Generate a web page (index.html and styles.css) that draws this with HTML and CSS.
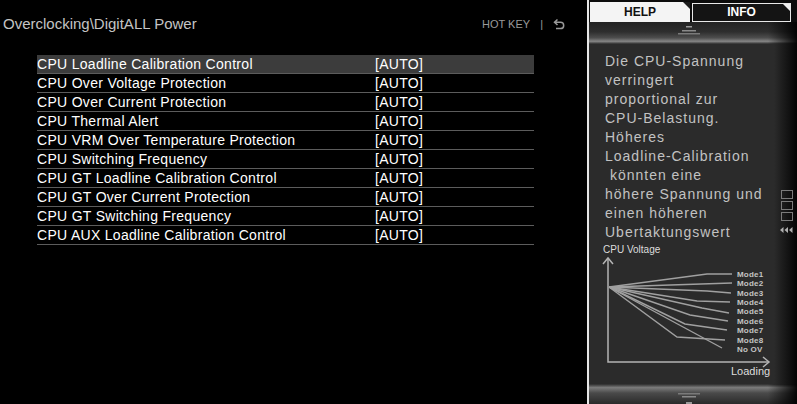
FILE: index.html
```html
<!DOCTYPE html>
<html lang="en">
<head>
    <meta charset="UTF-8">
    <meta name="viewport" content="width=device-width, initial-scale=1.0">
    <title>DigitALL Power</title>
    <link rel="stylesheet" href="styles.css">
</head>
<body>
    <main class="main">
        <header class="top-bar">
            <div class="path">Overclocking\DigitALL Power</div>
            <div class="hotkey">
                <span>HOT KEY</span>
                <span class="sep">|</span>
                <svg class="back-icon" width="12" height="12" viewBox="0 0 12 12">
                    <path d="M4.5 1.5 L1.5 4.2 L4.5 7 M1.5 4.2 H7.5 A3.2 3.2 0 0 1 7.5 10.6 H3" fill="none" stroke="#9a9a9a" stroke-width="1.5"/>
                </svg>
            </div>
        </header>

        <!-- settings list -->
        <div class="settings">
            <div class="row selected"><span class="label">CPU Loadline Calibration Control</span><span class="value">[AUTO]</span></div>
            <div class="row"><span class="label">CPU Over Voltage Protection</span><span class="value">[AUTO]</span></div>
            <div class="row"><span class="label">CPU Over Current Protection</span><span class="value">[AUTO]</span></div>
            <div class="row"><span class="label">CPU Thermal Alert</span><span class="value">[AUTO]</span></div>
            <div class="row"><span class="label">CPU VRM Over Temperature Protection</span><span class="value">[AUTO]</span></div>
            <div class="row"><span class="label">CPU Switching Frequency</span><span class="value">[AUTO]</span></div>
            <div class="row"><span class="label">CPU GT Loadline Calibration Control</span><span class="value">[AUTO]</span></div>
            <div class="row"><span class="label">CPU GT Over Current Protection</span><span class="value">[AUTO]</span></div>
            <div class="row"><span class="label">CPU GT Switching Frequency</span><span class="value">[AUTO]</span></div>
            <div class="row"><span class="label">CPU AUX Loadline Calibration Control</span><span class="value">[AUTO]</span></div>
        </div>
    </main>

    <aside class="panel">
        <div class="tabs">
            <div class="tab tab-help">HELP</div>
            <div class="tab tab-info">INFO</div>
        </div>

        <div class="band band-top">
            <svg width="24" height="14" viewBox="0 0 24 14">
                <rect x="9" y="4" width="6" height="1.5" fill="#9a9a9a"/>
                <rect x="5" y="8" width="14" height="1.5" fill="#8a8a8a"/>
                <rect x="1" y="11" width="22" height="1.5" fill="#7a7a7a"/>
            </svg>
        </div>

        <div class="help-body">
            <p class="help-text">Die CPU-Spannung<br>verringert<br>proportional zur<br>CPU-Belastung.<br>Höheres<br>Loadline-Calibration<br>&nbsp;könnten eine<br>höhere Spannung und<br>einen höheren<br>Ubertaktungswert</p>

            <svg class="chart" width="198" height="142" viewBox="0 0 198 142">
                <text x="14" y="11" class="axis-label">CPU Voltage</text>
                <g fill="none" stroke="#b4b4b4" stroke-width="1.5">
                    <path d="M19 16 V120 H180"/>
                    <path d="M14 22 L19 16 L24 22"/>
                    <path d="M174 115 L180 120 L174 125"/>
                </g>
                <g fill="none" stroke="#a0a0a0" stroke-width="1.4">
                    <path d="M20 45 L118 32 L143 32"/>
                    <path d="M20 45 L143 41"/>
                    <path d="M20 45 L118 49 L142 51"/>
                    <path d="M20 45 L108 59 L141 60"/>
                    <path d="M20 45 L113 66 L140 71"/>
                    <path d="M20 45 L101 73 L139 79"/>
                    <path d="M20 45 L96 82 L138 88"/>
                    <path d="M20 45 L88 95 L136 98"/>
                    <path d="M20 45 L133 106"/>
                </g>
                <g class="mode-label">
                    <text x="148" y="34.5">Mode1</text>
                    <text x="148" y="43.5">Mode2</text>
                    <text x="148" y="54">Mode3</text>
                    <text x="148" y="63">Mode4</text>
                    <text x="148" y="72">Mode5</text>
                    <text x="148" y="82">Mode6</text>
                    <text x="148" y="91">Mode7</text>
                    <text x="148" y="101">Mode8</text>
                    <text x="148" y="110">No OV</text>
                </g>
                <text x="142" y="133" class="axis-label loading">Loading</text>
            </svg>
        </div>

        <div class="band band-bottom">
            <svg width="24" height="20" viewBox="0 0 24 20">
                <rect x="1" y="9" width="22" height="1.5" fill="#7a7a7a"/>
                <rect x="5" y="12" width="14" height="1.5" fill="#8a8a8a"/>
                <rect x="9" y="18" width="6" height="2" fill="#9a9a9a"/>
            </svg>
        </div>

        <!-- scroll marks over the right edge -->
        <div class="scroll-marks">
            <span class="mark"></span>
            <span class="mark"></span>
            <span class="mark"></span>
            <svg class="arrows" width="13" height="6" viewBox="0 0 13 6">
                <path d="M0 3 L3.5 0 V6 Z M4.5 3 L8 0 V6 Z M9 3 L12.5 0 V6 Z" fill="#b0b0b0"/>
            </svg>
        </div>
    </aside>
</body>
</html>
```

FILE: styles.css
```css
html, body {
    margin: 0;
    padding: 0;
    height: 404px;
    overflow: hidden;
}

body {
    display: flex;
    background-color: #000000;
    font-family: "Liberation Sans", Arial, sans-serif;
    color: #ffffff;
}

.main {
    width: 587px;
    flex-shrink: 0;
}

.top-bar {
    display: flex;
    justify-content: space-between;
    align-items: flex-start;
    padding: 14px 22px 0 3px;
    height: 20px;
}

.path {
    font-size: 15px;
    line-height: 20px;
    color: #c4c4c4;
}

.hotkey {
    display: flex;
    align-items: center;
    gap: 8px;
    margin-top: 3px;
    font-size: 11px;
    line-height: 14px;
    color: #9a9a9a;
}

.hotkey .sep {
    margin: 0 2px;
}

.settings {
    margin: 21px 0 0 37px;
    width: 497px;
}

.row {
    display: flex;
    height: 18px;
    line-height: 18px;
    font-size: 14px;
    letter-spacing: 0.3px;
    border-bottom: 1px solid #5c5c5c;
}

.row.selected {
    background-color: #3c3c3c;
}

.row .label {
    width: 338px;
}

/* help panel */
.panel {
    position: relative;
    width: 208px;
    border-left: 2px solid #e6e6e6;
    display: flex;
    flex-direction: column;
    background: linear-gradient(to right, #2b2b2b 89%, #040404 100%);
}

.tabs {
    display: flex;
    height: 20px;
    padding-top: 2px;
    background-color: #0c0c0c;
}

.tab {
    position: relative;
    height: 20px;
    line-height: 20px;
    text-align: center;
    font-size: 12px;
    font-weight: bold;
    box-sizing: border-box;
}

.tab-help {
    width: 100px;
    margin-left: 1px;
    background-color: #f4f4f4;
    color: #111111;
}

.tab-help::after {
    content: "";
    position: absolute;
    top: 0;
    right: 0;
    border-top: 7px solid #1c1c1c;
    border-left: 7px solid transparent;
}

.tab-info {
    width: 99px;
    margin-left: 2px;
    margin-top: 1px;
    height: 19px;
    line-height: 16px;
    border: 1.5px solid #e8e8e8;
    background-color: #141414;
    color: #ffffff;
}

.tab-info::after {
    content: "";
    position: absolute;
    top: 0;
    right: 0;
    border-top: 7px solid #f0f0f0;
    border-left: 7px solid transparent;
}

.band {
    display: flex;
    justify-content: center;
    padding-right: 8px;
}

.band-top {
    height: 22px;
    background:
        linear-gradient(to right, rgba(0, 0, 0, 0) 86%, rgba(0, 0, 0, 0.95) 100%),
        linear-gradient(to bottom, #232323 0%, #2e2e2e 45%, #4e4e4e 72%, #858585 88%, #2c2c2c 100%);
}

.band-bottom {
    height: 20px;
    background:
        linear-gradient(to right, rgba(0, 0, 0, 0) 86%, rgba(0, 0, 0, 0.95) 100%),
        linear-gradient(to bottom, #2c2c2c 0%, #7c7c7c 18%, #4a4a4a 45%, #2a2a2a 100%);
}

.help-body {
    flex: 1;
}

.help-text {
    margin: 0;
    padding: 8px 0 0 16px;
    font-size: 14px;
    line-height: 19px;
    letter-spacing: 1px;
    color: #c2c2c2;
}

.chart {
    display: block;
}

.axis-label {
    font-family: "Liberation Sans", Arial, sans-serif;
    font-size: 10px;
    fill: #dddddd;
}

.axis-label.loading {
    font-size: 11px;
}

.mode-label text {
    font-family: "Liberation Sans", Arial, sans-serif;
    font-size: 8px;
    font-weight: bold;
    letter-spacing: 0.2px;
    fill: #c4c4c4;
}

.scroll-marks {
    position: absolute;
    right: 4px;
    top: 190px;
    display: flex;
    flex-direction: column;
    align-items: center;
    gap: 2px;
}

.mark {
    display: block;
    width: 10px;
    height: 7px;
    border: 1px solid #7a7a7a;
}

.arrows {
    margin-top: 4px;
}
```
